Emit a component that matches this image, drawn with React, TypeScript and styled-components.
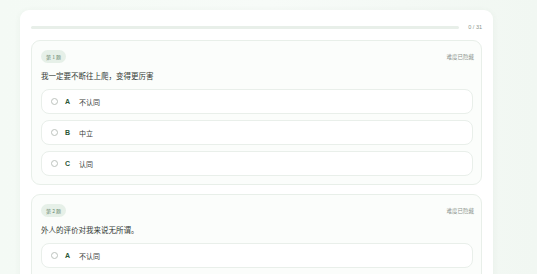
import styled, { createGlobalStyle } from 'styled-components'

const GlobalStyle = createGlobalStyle`
  html, body {
    margin: 0;
    padding: 0;
    height: 100%;
    overflow: hidden;
  }
  body {
    background: linear-gradient(90deg, #f4faf5 0%, #f7fbf8 50%, #f1f7f2 100%);
    font-family: "Noto Sans CJK SC", "Noto Sans", sans-serif;
    color: #333;
  }
`

const Page = styled.div`
  padding: 10px 0 0 20px;
`

const Panel = styled.div`
  width: 473px;
  box-sizing: border-box;
  background: #fff;
  border-radius: 9px;
  padding: 11px 11px 20px;
  box-shadow: 0 1px 6px rgba(60, 110, 70, 0.06);
  display: flex;
  flex-direction: column;
  gap: 9px;
`

const ProgressRow = styled.div`
  display: flex;
  align-items: center;
  gap: 9px;
  height: 10px;
  margin: 1px 0 -1px;
`

const Track = styled.div`
  flex: 1;
  height: 3px;
  border-radius: 2px;
  background: #e8efe9;
  overflow: hidden;
`

const Fill = styled.div`
  height: 100%;
  background: #6ea67a;
`

const Count = styled.span`
  font-family: "Liberation Sans", sans-serif;
  font-size: 5.5px;
  color: #8a958c;
  white-space: nowrap;
`

const Card = styled.div`
  border: 1px solid #e8efe9;
  border-radius: 9px;
  background: #fbfdfb;
  padding: 9px 8px 8px 9px;
  display: flex;
  flex-direction: column;
`

const CardHead = styled.div`
  display: flex;
  align-items: center;
  justify-content: space-between;
  height: 13px;
`

const Badge = styled.span`
  display: inline-flex;
  align-items: center;
  height: 13px;
  padding: 0 5px;
  border-radius: 7px;
  background: #e6f0e8;
  color: #6a8a71;
  font-size: 5px;
`

const Hint = styled.span`
  font-size: 5.5px;
  color: #8e968f;
  margin-right: -1px;
`

const Question = styled.div`
  font-size: 7.5px;
  line-height: 10px;
  color: #333a35;
  margin: 8px 0 8px;
`

const Options = styled.div`
  display: flex;
  flex-direction: column;
  gap: 6px;
`

const Option = styled.div`
  height: 25px;
  box-sizing: border-box;
  border: 1px solid #e9efea;
  border-radius: 8px;
  background: #fff;
  display: flex;
  align-items: center;
  padding-left: 9px;
`

const Radio = styled.span`
  width: 5px;
  height: 5px;
  border-radius: 50%;
  border: 1px solid #bcc2bd;
  margin-right: 7px;
`

const Letter = styled.span`
  font-family: "Liberation Sans", sans-serif;
  font-weight: 700;
  font-size: 7px;
  color: #2a5636;
  width: 14px;
`

const OptionText = styled.span`
  font-size: 7px;
  color: #3a403b;
`

type Q = { no: number; text: string; options: [string, string][] }

const questions: Q[] = [
  {
    no: 1,
    text: '我一定要不断往上爬，变得更厉害',
    options: [
      ['A', '不认同'],
      ['B', '中立'],
      ['C', '认同'],
    ],
  },
  {
    no: 2,
    text: '外人的评价对我来说无所谓。',
    options: [
      ['A', '不认同'],
      ['B', '中立'],
      ['C', '认同'],
    ],
  },
]

const QuestionCard = ({ q }: { q: Q }) => (
  <Card>
    <CardHead>
      <Badge>第 {q.no} 题</Badge>
      <Hint>难度已隐藏</Hint>
    </CardHead>
    <Question>{q.text}</Question>
    <Options>
      {q.options.map(([key, label]) => (
        <Option key={key}>
          <Radio />
          <Letter>{key}</Letter>
          <OptionText>{label}</OptionText>
        </Option>
      ))}
    </Options>
  </Card>
)

export default function App() {
  const answered = 0
  const total = 31
  return (
    <>
      <GlobalStyle />
      <Page>
        <Panel>
          <ProgressRow>
            <Track>
              <Fill style={{ width: `${(answered / total) * 100}%` }} />
            </Track>
            <Count>
              {answered} / {total}
            </Count>
          </ProgressRow>
          {questions.map((q) => (
            <QuestionCard key={q.no} q={q} />
          ))}
        </Panel>
      </Page>
    </>
  )
}
